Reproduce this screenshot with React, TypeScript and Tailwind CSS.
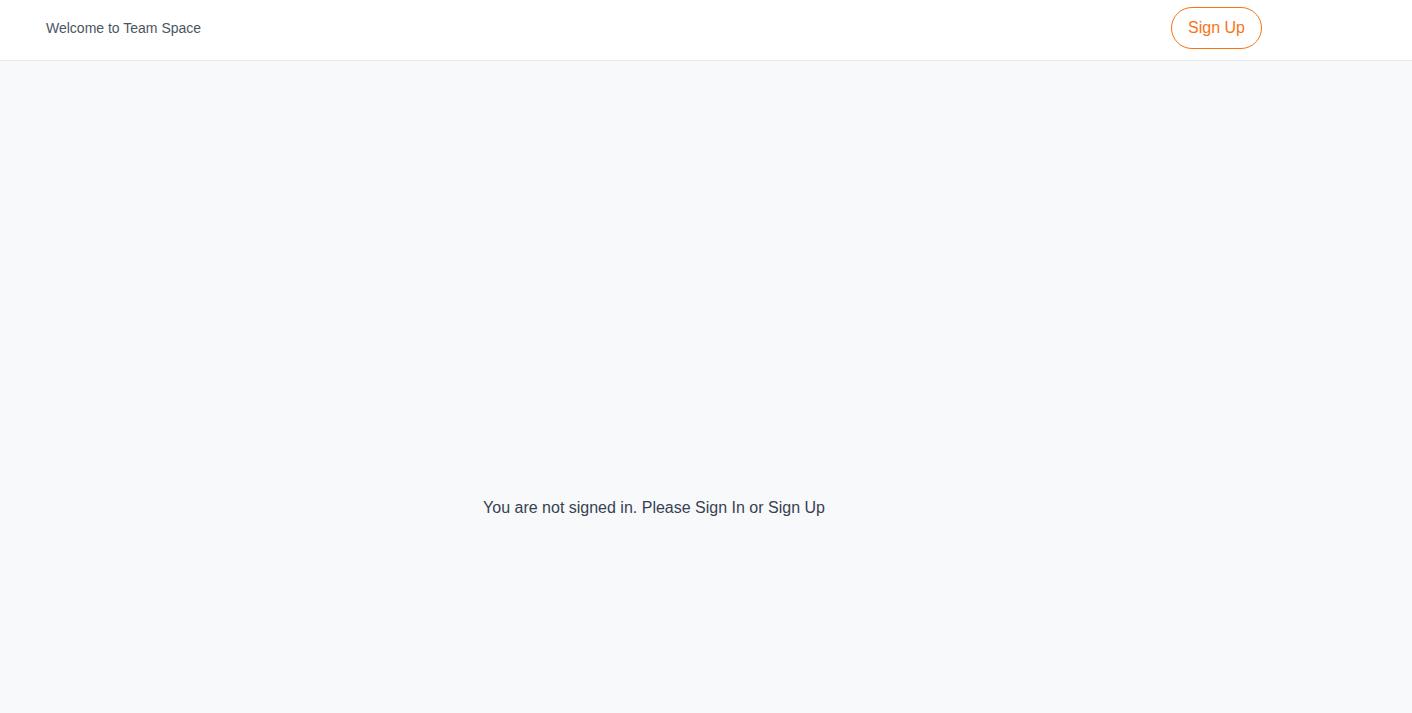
export default function App() {
  return (
    <div
      className="min-h-screen bg-[#f8f9fb] flex flex-col"
      style={{ fontFamily: '"Liberation Sans", Arial, sans-serif' }}
    >
      <header className="h-[61px] bg-white border-b border-[#e5e7eb] flex items-center justify-between pl-[46px] pr-[150px] pb-[5px]">
        <span className="text-sm text-[#4b5563]">Welcome to Team Space</span>
        <button className="h-[42px] w-[91px] rounded-full border border-[#f97316] text-[#f97316] text-base bg-white">
          Sign Up
        </button>
      </header>

      <main className="flex-1 flex justify-center pt-[435px] pr-[104px]">
        <p className="text-base text-[#374151]">
          You are not signed in. Please Sign In or Sign Up
        </p>
      </main>
    </div>
  )
}
